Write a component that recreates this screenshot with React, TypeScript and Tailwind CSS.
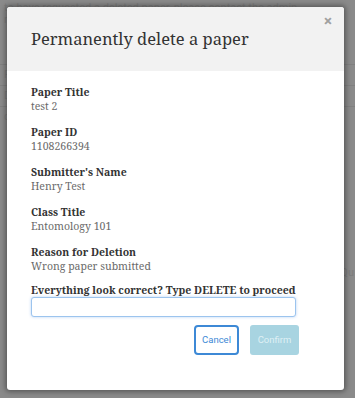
const serif = { fontFamily: '"Noto Serif", "Liberation Serif", serif' };
const sans = { fontFamily: 'Roboto, "Liberation Sans", sans-serif' };

const fields = [
  { label: "Paper Title", value: "test 2" },
  { label: "Paper ID", value: "1108266394" },
  { label: "Submitter's Name", value: "Henry Test" },
  { label: "Class Title", value: "Entomology 101" },
  { label: "Reason for Deletion", value: "Wrong paper submitted" },
];

function BackgroundPage() {
  return (
    <div className="w-full h-full text-[#7d7d7d] text-[11px]" style={sans}>
      <div className="px-1 pt-[2px] leading-[12px]">
        <div>to have requested a deleted paper, please contact the admin</div>
        <div>n</div>
      </div>
      <div className="mt-[38px] border-t border-[#808080]" />
      <div className="px-1 py-[4px] leading-[12px]">P</div>
      <div className="border-t border-[#808080]" />
      <div className="px-1 py-[4px] leading-[12px]">D</div>
      <div className="border-t border-[#808080]" />
      <div className="px-1 py-[4px] leading-[12px]">co</div>
      <div className="mt-[140px] flex justify-end px-[1px] leading-[12px]">Qu</div>
    </div>
  );
}

export default function App() {
  return (
    <div className="relative w-[355px] h-[398px] overflow-hidden bg-[#8a8a8a]">
      <BackgroundPage />

      <div className="absolute left-[7px] top-[7px] w-[337px] h-[383px] rounded-[3px] bg-white shadow-[0_0_5px_2px_rgba(0,0,0,0.35)] overflow-hidden">
        <div className="relative h-[64px] bg-[#f2f2f2] px-[24px] flex items-center">
          <h2 className="text-[16.5px] text-[#333] leading-none" style={serif}>
            Permanently delete a paper
          </h2>
          <button
            className="absolute right-[12px] top-[7px] text-[15px] font-bold leading-none text-[#a0a0a0]"
            style={sans}
          >
            &times;
          </button>
        </div>

        <div className="pt-[14px] pl-[24px]" style={serif}>
          {fields.map((f, i) => (
            <div key={f.label} className={i === fields.length - 1 ? "mb-[10px]" : "mb-[12px]"}>
              <div className="text-[10.5px] font-bold leading-[14px] text-[#333]">{f.label}</div>
              <div className="text-[10.5px] leading-[14px] text-[#6a6a6a]">{f.value}</div>
            </div>
          ))}

          <div className="text-[10.5px] font-bold leading-[14px] text-[#333]">
            Everything look correct? Type DELETE to proceed
          </div>
          <input
            className="block w-[265px] h-[20px] rounded-[3px] border border-[#9cc4ee] bg-white px-2 text-[11px] outline-none shadow-[0_0_3px_rgba(90,150,230,0.45)]"
            style={sans}
          />

          <div className="mt-[8px] w-[268px] flex justify-end gap-[11px]" style={sans}>
            <button className="w-[45px] h-[30px] rounded-[4px] border-2 border-[#3d89d6] bg-white text-[9.5px] text-[#3d89d6]">
              Cancel
            </button>
            <button
              disabled
              className="w-[49px] h-[30px] rounded-[3px] bg-[#a8d4e1] text-[9.5px] text-[#dff0f5]"
            >
              Confirm
            </button>
          </div>
        </div>
      </div>
    </div>
  );
}
